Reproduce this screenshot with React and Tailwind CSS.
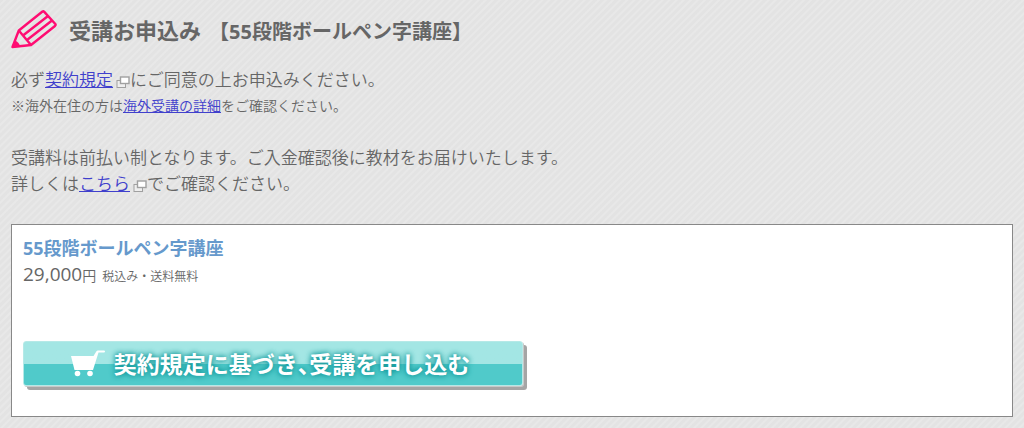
const PencilIcon = () => (
    <svg viewBox="0 0 46 40" className="w-[46px] h-10 shrink-0" fill="none" stroke="#ff0d72" strokeWidth="2.4" strokeLinejoin="round" aria-hidden="true">
        <path d="M1.500 37 L7.800 20.500 L31.500 1.500 Q32.500 0.900 33.300 1.900 L44.300 14 Q45 15 44 16 L20 35 Z" />
        <path d="M7.800 20.500 L20 35 M12 25.500 L37 6 M16 30 L41 10.500" />
        <path d="M1.500 37 L4 30.500 Q8 32 9 36.300 Z" fill="#ff0d72" stroke="none" />
    </svg>
);

const WindowIcon = () => (
    <svg viewBox="0 0 14 12" className="inline-block w-[14px] h-3 ml-[3px] align-[-2px]" fill="#eee" stroke="#a0a0a0" role="img" aria-label="別ウィンドウ">
        <rect x="1" y="4.500" width="8.500" height="7" />
        <rect x="4.500" y="1" width="8.500" height="6.500" fill="#fff" strokeWidth="1.4" />
    </svg>
);

const CartIcon = () => (
    <svg viewBox="0 0 36 28" className="w-9 h-7 shrink-0" fill="#fff" aria-hidden="true">
        <path d="M1 6 H23.500 L26.300 1.500 Q26.800 0.500 28 0.500 H34 Q35 0.500 35 1.500 Q35 2.500 34 2.500 H28.500 L23 20 H4.500 Z" />
        <circle cx="7.500" cy="23.500" r="2.800" />
        <circle cx="20" cy="23.500" r="2.800" />
    </svg>
);

const TextLink = ({ children }) => (
    <a href="#" className="text-[#4040cc] underline">{children}</a>
);

export default function App() {
    return (
        <main className="min-h-screen px-[11px] pt-2 pb-[11px] text-[17px] leading-[26px] text-[#666] font-['Open_Sans','Noto_Sans_CJK_JP',sans-serif] bg-[repeating-linear-gradient(135deg,#e3e3e3_0px,#e3e3e3_2px,#e8e8e8_3px,#e8e8e8_4px,#e3e3e3_5px)]">
            <header className="flex items-center h-11">
                <PencilIcon />
                <h1 className="ml-3 flex items-center font-bold">
                    <span className="text-[22px]">受講お申込み</span>
                    <span className="ml-2 pt-1 text-[20px]">【55段階ボールペン字講座】</span>
                </h1>
            </header>

            <section className="mt-[15px] font-[350]">
                <p>必ず<TextLink>契約規定</TextLink><WindowIcon />にご同意の上お申込みください。</p>
                <p className="text-[14px]">※海外在住の方は<TextLink>海外受講の詳細</TextLink>をご確認ください。</p>
                <p className="mt-[26px]">受講料は前払い制となります。ご入金確認後に教材をお届けいたします。</p>
                <p>詳しくは<TextLink>こちら</TextLink><WindowIcon />でご確認ください。</p>
            </section>

            <section className="mt-[27px] border border-[#888] bg-white px-[11px] pt-[10px] pb-[30px]">
                <h2 className="font-bold text-[18px] text-[#6699cc]">55段階ボールペン字講座</h2>
                <p className="flex items-baseline font-[350]">
                    <span className="text-[19px] font-normal">29,000</span>
                    <span className="text-[14px]">円</span>
                    <span className="ml-1.5 text-[12px]">税込み・送料無料</span>
                </p>
                <button
                    type="button"
                    className="mt-[51px] flex h-[45px] w-full max-w-[500px] items-center justify-center rounded-[3px] border border-[#b5e9e7] bg-linear-to-b from-[#a3e6e4] from-50% to-[#50caca] to-50% pr-1.5 text-[23px] font-bold text-white shadow-[1px_1px_0_#c8c8c8,4px_4px_0_#a5a5a5] cursor-pointer"
                >
                    <CartIcon />
                    <span className="ml-2 [text-shadow:0_0_5px_#159a9c,0_0_6px_#159a9c]">
                        契約規定に基づき<span className="[font-feature-settings:'halt']">、</span>受講を申し込む
                    </span>
                </button>
            </section>
        </main>
    );
}
